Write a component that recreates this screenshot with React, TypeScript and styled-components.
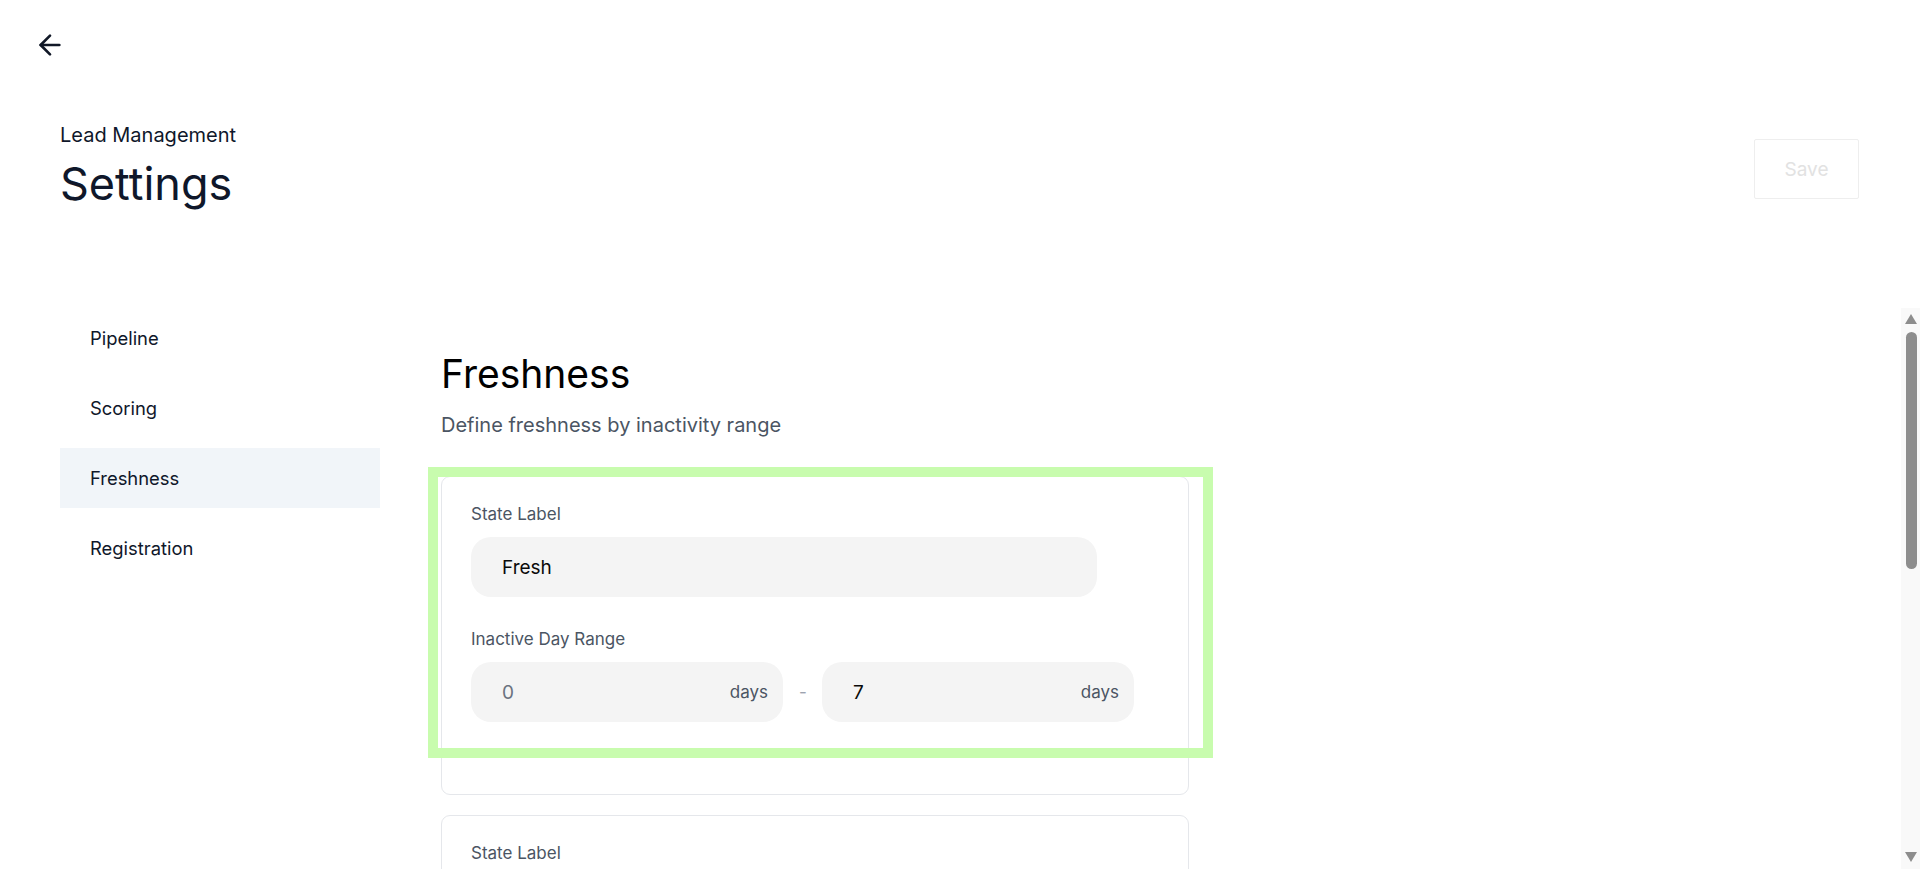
import React from "react";
import styled, { createGlobalStyle } from "styled-components";
import { ArrowLeft } from "lucide-react";

type FreshnessState = {
  id: string;
  label: string;
  from: number;
  to: number | null;
};

const states: FreshnessState[] = [
  { id: "fresh", label: "Fresh", from: 0, to: 7 },
  { id: "warm", label: "Warm", from: 8, to: 30 },
  { id: "stale", label: "Stale", from: 31, to: null },
];

const navItems = ["Pipeline", "Scoring", "Freshness", "Registration"];

const GlobalStyle = createGlobalStyle`
  html, body {
    margin: 0;
    padding: 0;
    height: 100%;
    overflow: hidden;
    background: #ffffff;
    font-family: Inter, "Noto Sans", "Liberation Sans", sans-serif;
  }
  #root {
    height: 100%;
  }
  * {
    box-sizing: border-box;
  }
`;

const Page = styled.div`
  height: 100vh;
  display: flex;
  flex-direction: column;
  color: #0f172a;
`;

const TopBar = styled.div`
  padding: 29px 0 0 34px;
  height: 63px;
  display: flex;
`;

const BackButton = styled.button`
  border: 0;
  background: none;
  padding: 0;
  width: 32px;
  height: 32px;
  display: flex;
  align-items: center;
  justify-content: center;
  color: #111827;
  cursor: pointer;
`;

const Header = styled.header`
  display: flex;
  align-items: center;
  justify-content: space-between;
  padding: 0 61px 0 60px;
  margin-top: 60px;
`;

const TitleBlock = styled.div`
  display: flex;
  flex-direction: column;
  gap: 10px;
`;

const Eyebrow = styled.span`
  font-size: 20px;
  line-height: 24px;
  color: #0f172a;
`;

const PageTitle = styled.h1`
  margin: 0;
  font-size: 45px;
  font-weight: 400;
  line-height: 54px;
  color: #0f172a;
`;

const SaveButton = styled.button`
  width: 105px;
  height: 60px;
  margin-top: 4px;
  border: 1px solid #eeeeee;
  border-radius: 2px;
  background: #ffffff;
  color: #e2e2e2;
  font-family: inherit;
  font-size: 19px;
`;

const Body = styled.div`
  flex: 1;
  min-height: 0;
  display: flex;
  margin-top: 97px;
`;

const Sidebar = styled.nav`
  width: 320px;
  margin-left: 60px;
  flex-shrink: 0;
  display: flex;
  flex-direction: column;
  gap: 10px;
`;

const NavItem = styled.div<{ $active?: boolean }>`
  height: 60px;
  padding: 0 30px;
  display: flex;
  align-items: center;
  font-size: 18.4px;
  color: #0f172a;
  background: ${(p) => (p.$active ? "#f1f5f9" : "transparent")};
  cursor: pointer;
`;

const Content = styled.main`
  flex: 1;
  overflow: hidden;
  padding: 42px 0 90px 61px;
`;

/* decorative scrollbar, the page's scroll area rail */
const ScrollRail = styled.div`
  width: 19px;
  flex-shrink: 0;
  background: #f9f9f9;
  display: flex;
  flex-direction: column;
  align-items: center;
  padding: 6px 0 7px 1px;
`;

const RailArrow = styled.span<{ $down?: boolean }>`
  width: 0;
  height: 0;
  border-left: 6.5px solid transparent;
  border-right: 6.5px solid transparent;
  ${(p) =>
    p.$down
      ? "border-top: 10px solid #8d8d8d; margin-top: auto;"
      : "border-bottom: 10px solid #8d8d8d;"}
`;

const RailThumb = styled.span`
  width: 11px;
  height: 237px;
  margin-top: 8px;
  border-radius: 6px;
  background: #8d8d8d;
`;

const SectionTitle = styled.h2`
  margin: 0;
  font-size: 39px;
  font-weight: 400;
  line-height: 47px;
  color: #000000;
`;

const SectionText = styled.p`
  margin: 16px 0 39px;
  font-size: 20px;
  line-height: 24px;
  color: #4b5563;
`;

const CardList = styled.div`
  display: flex;
  flex-direction: column;
  gap: 20px;
  width: 748px;
`;

const Card = styled.div`
  position: relative;
  border: 1px solid #e5e7eb;
  border-radius: 9px;
  padding: 27px 29px 72px;
  display: flex;
  flex-direction: column;
`;

const Highlight = styled.div`
  position: absolute;
  left: -14px;
  top: -10px;
  width: 785px;
  height: 291px;
  border: 10px solid #c8fcae;
  pointer-events: none;
`;

const FieldLabel = styled.label`
  display: block;
  font-size: 17px;
  line-height: 21px;
  color: #4b5563;
  margin-bottom: 12px;
`;

const Field = styled.div`
  & + & {
    margin-top: 32px;
  }
`;

const TextBox = styled.div`
  width: 626px;
  height: 60px;
  border-radius: 20px;
  background: #f4f4f4;
  padding: 0 31px;
  display: flex;
  align-items: center;
  font-size: 19px;
  color: #0a0a0a;
`;

const RangeRow = styled.div`
  display: flex;
  align-items: center;
  gap: 16px;
`;

const RangeBox = styled.div<{ $muted?: boolean }>`
  width: 312px;
  height: 60px;
  border-radius: 20px;
  background: #f4f4f4;
  padding: 0 15px 0 31px;
  display: flex;
  align-items: center;
  justify-content: space-between;
  font-size: 19px;
  color: ${(p) => (p.$muted ? "#6b7280" : "#0a0a0a")};
`;

const Unit = styled.span`
  font-size: 17px;
  color: #4b5563;
`;

const Dash = styled.span`
  font-size: 17px;
  color: #9ca3af;
  width: 7px;
  text-align: center;
`;

const StateCard: React.FC<{ state: FreshnessState; highlighted?: boolean }> = ({
  state,
  highlighted,
}) => (
  <Card>
    {highlighted && <Highlight />}
    <Field>
      <FieldLabel>State Label</FieldLabel>
      <TextBox>{state.label}</TextBox>
    </Field>
    <Field>
      <FieldLabel>Inactive Day Range</FieldLabel>
      <RangeRow>
        <RangeBox $muted>
          <span>{state.from}</span>
          <Unit>days</Unit>
        </RangeBox>
        <Dash>-</Dash>
        <RangeBox>
          <span>{state.to ?? ""}</span>
          <Unit>days</Unit>
        </RangeBox>
      </RangeRow>
    </Field>
  </Card>
);

export default function App() {
  return (
    <>
      <GlobalStyle />
      <Page>
        <TopBar>
          <BackButton aria-label="Back">
            <ArrowLeft size={32} strokeWidth={2} />
          </BackButton>
        </TopBar>
        <Header>
          <TitleBlock>
            <Eyebrow>Lead Management</Eyebrow>
            <PageTitle>Settings</PageTitle>
          </TitleBlock>
          <SaveButton disabled>Save</SaveButton>
        </Header>
        <Body>
          <Sidebar>
            {navItems.map((item) => (
              <NavItem key={item} $active={item === "Freshness"}>
                {item}
              </NavItem>
            ))}
          </Sidebar>
          <Content>
            <SectionTitle>Freshness</SectionTitle>
            <SectionText>Define freshness by inactivity range</SectionText>
            <CardList>
              {states.map((s, i) => (
                <StateCard key={s.id} state={s} highlighted={i === 0} />
              ))}
            </CardList>
          </Content>
          <ScrollRail aria-hidden>
            <RailArrow />
            <RailThumb />
            <RailArrow $down />
          </ScrollRail>
        </Body>
      </Page>
    </>
  );
}
